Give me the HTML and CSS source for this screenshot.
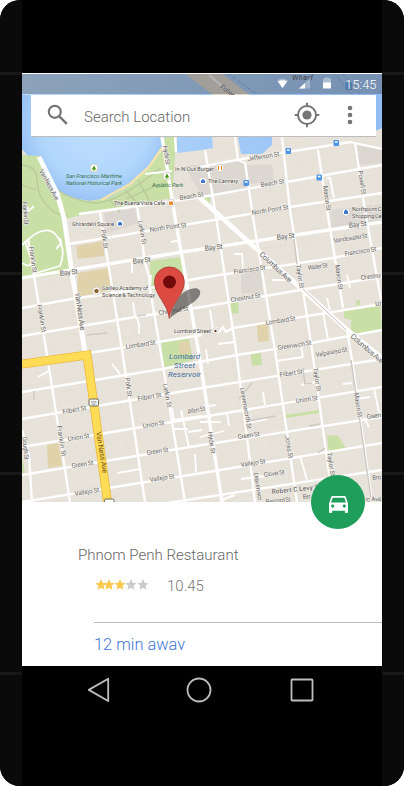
FILE: index.html
```html
<!DOCTYPE html>
<html lang="en">
<head>
<meta charset="utf-8">
<title>Search Location</title>
<link rel="stylesheet" href="styles.css">
</head>
<body>
<div class="device">
  <div class="edge"><i></i><i></i><i></i><i></i></div>
  <div class="front">
    <div class="screen">
      <div class="hero">
        <svg class="map" viewBox="22 73 360 429" width="360" height="429">
          <defs>
            <pattern id="lots" width="13" height="11" patternUnits="userSpaceOnUse" patternTransform="rotate(-9)">
              <path d="M0 .5H13M4 0V11M9.5 0V6" fill="none" stroke="#e2dcd2" stroke-width=".5"/>
            </pattern>
            <linearGradient id="sea" x1="0" x2="1" y1="0" y2="0"><stop offset="0" stop-color="#b9ddff"/><stop offset="1" stop-color="#92bdf3"/></linearGradient>
            <radialGradient id="bay" gradientUnits="userSpaceOnUse" cx="95" cy="125" r="85"><stop offset="0" stop-color="#bfe0ff"/><stop offset=".65" stop-color="#b1d6fc"/><stop offset="1" stop-color="#8fbbf2"/></radialGradient>
          </defs>
          <rect x="22" y="73" width="360" height="429" fill="#e8e3da"/>
          <rect x="22" y="73" width="360" height="429" fill="url(#lots)"/>
          <path d="M22 73H382V128L366 135L272 136V145L262 154H241L238 137H212L213 148L202 150L177 153V137H22Z" fill="url(#sea)"/>
          <path d="M22 95H165V145L149 168L132 184L109 198L89 201L72 198L54 188L47 177L40 157L29 157L22 149Z" fill="url(#bay)"/>
          <path d="M184 73H221L250 95H213Z" fill="#e0d6c8"/>
          <path d="M228 73L256 94M334 73L350 94M342 73L360 94" stroke="#779fd2" stroke-width="1" stroke-dasharray="4 2"/>
          <path d="M209 75L231 94" stroke="#fff" stroke-width="2"/>
          <g fill="#c8dfa5">
            <path d="M22 155L40 156L47 178L54 188L72 198L89 201L109 198L132 184L149 168L161 149L165 137H176L174 171L172 198L137 204L100 211L65 219L66 228L69 273L22 280Z"/>
            <path d="M150 261L181 257L184 274L165 277V288L150 290Z"/>
            <path d="M161 341L189 338L193 360L164 368Z"/>
            <path d="M344 311L380 306L382 330L351 335V320L344 318ZM230 303L238 302L239 313L231 314ZM251 354L261 353L262 365L252 366ZM327 435L338 436L344 445L347 450L329 453ZM285 415L319 410V413L286 418ZM22 457L25 473H22ZM200 195L210 194V204ZM356 301L360 300V305L356 306Z"/>
          </g>
          <path d="M76 246L104 241V256L78 259ZM78 273L108 268L112 290L77 297ZM257 325L268 324L269 341L258 342ZM47 445L59 443L62 466L48 468ZM178 343L189 341L191 353L180 355Z" fill="#e0d2ab"/>
          <path d="M104 213L135 208L139 223L107 233ZM185 166L244 160L250 190L202 197ZM247 165L272 164L274 181L249 184ZM354 145L382 150V163L356 165ZM330 210L382 204V222L332 231ZM241 269L261 267L263 294L241 293Z" fill="#dcd7d0"/>
          <path d="M101 200L130 184L149 167L162 148" fill="none" stroke="#f2e3ae" stroke-width="2.5"/>
          <g fill="none" stroke="#b8c99e" stroke-width="1.3">
            <path d="M22 165C45 168 32 184 42 199S58 214 68 216M54 188Q75 202 95 203T161 168M110 200L120 212M125 190L138 204M138 180L150 202M126 199L165 182M22 185L36 190"/>
          </g>
          <g class="roads">
            <g class="thin">
              <path d="M22 217L34 206M24 222L28 207M22 245Q45 222 56 235T60 266L36 273L25 242M22 263Q32 270 31 258M56 249Q64 242 59 238M132 262V273M171 242L180 240M234 254H242L243 268M272 280H285M327 298L330 310M347 275L350 288M38 377L49 371M112 364L120 374M117 473L140 469M150 289L151 275M133 302L135 316Q140 320 139 334M172 408L174 420M181 410L189 448M173 420L202 416M174 429H188M188 432L202 430M195 454L196 472M206 349L208 364M263 392L265 405M248 423L267 419M227 412L229 426M301 385L320 381M300 456L307 480M241 479L275 475M343 384L352 383M364 418L369 427M200 407L216 405M200 422L221 422M200 437L224 431M210 310L213 329M323 313L328 339M218 344L235 342M301 345L303 357L276 361M356 399L370 397M374 388L379 413M145 174L172 171M327 178H330L334 198"/>
            </g>
            <path d="M200 167L247 158L320 147L350 142L382 149"/>
            <path d="M79 214L202 197L382 165"/>
            <path d="M69 244L202 222L290 207L382 193"/>
            <path class="wide" d="M22 278L182 252L382 222"/>
            <path d="M22 308L72 299L150 288L200 278L333 258L382 248"/>
            <path d="M22 336L135 317L202 307L300 290L382 277"/>
            <path d="M89 353L202 335M233 328L382 304M212 332L216 328L218 333L223 327L226 332L233 328"/>
            <path d="M22 392L162 369L237 355L300 345L382 330"/>
            <path d="M22 419L202 388L382 359"/>
            <path d="M22 447L202 417L382 387"/>
            <path d="M22 475L202 445L382 417"/>
            <path d="M22 502L202 473L382 443"/>
            <path d="M160 504L200 498L382 470M222 500L235 495"/>
            <path d="M28 239L47 355L70 502M22 430L29 455L32 502"/>
            <path d="M100 212L122 350L145 502"/>
            <path d="M137 205L145 263L149 276L150 289L162 360L185 502"/>
            <path class="wide" d="M162 137L175 217L200 360L222 502"/>
            <path d="M175 137L176 152M205 150L215 210L236 350L255 502"/>
            <path d="M235 137L238 160L245 163L253 217L275 350L297 502"/>
            <path d="M282 137L290 210L303 290L312 350L333 502"/>
            <path d="M318 150L327 210L343 308M347 330L352 360L372 502"/>
            <path d="M355 143L365 210L381 300"/>
            <path class="broad" d="M39 157L57 193L64 218L72 273L85 352"/>
            <path class="broad" d="M200 198L260 252L303 290L345 328L382 358"/>
          </g>
          <path d="M294 239L297 264M252 383L239 399M303 368L305 384L312 383M248 421L276 416M309 426L320 424M318 453L325 448M87 335L107 333M34 391V400M137 316L146 315M351 360L371 498" fill="none" stroke="#cdc9c3" stroke-width="1.5"/>
          <path d="M303 289L346 330" stroke="#c7c2bb" stroke-width="1"/>
          <path d="M22 364L87 355L108 505" fill="none" stroke="#e9b83f" stroke-width="9"/>
          <path d="M22 364L87 355L108 505" fill="none" stroke="#ffdc55" stroke-width="7.400"/>

          <g class="st">
            <text textLength="32" transform="translate(248 161) rotate(-9)">Jefferson St</text>
            <text textLength="24" transform="translate(180 200) rotate(-9)">Beach St</text>
            <text textLength="24" transform="translate(261 187) rotate(-9)">Beach St</text>
            <text textLength="37" transform="translate(150 232) rotate(-8)">North Point St</text>
            <text textLength="37" transform="translate(252 215) rotate(-9)">North Point St</text>
            <text class="lg" textLength="18" transform="translate(60 276) rotate(-7)">Bay St</text>
            <text class="lg" textLength="18" transform="translate(133 264) rotate(-7)">Bay St</text>
            <text class="lg" textLength="18" transform="translate(205 251) rotate(-7)">Bay St</text>
            <text class="lg" textLength="18" transform="translate(277 240) rotate(-7)">Bay St</text>
            <text class="lg" textLength="18" transform="translate(349 228) rotate(-7)">Bay St</text>
            <text textLength="34" transform="translate(334 243) rotate(-9)">Vandewater St</text>
            <text textLength="32" transform="translate(345 256) rotate(-9)">Francisco St</text>
            <text textLength="32" transform="translate(234 274) rotate(-8)">Francisco St</text>
            <text textLength="20" transform="translate(308 270) rotate(-8)">Water St</text>
            <text textLength="30" transform="translate(159 315) rotate(-9)">Chestnut St</text>
            <text textLength="30" transform="translate(231 302) rotate(-9)">Chestnut St</text>
            <text textLength="20" transform="translate(361 280) rotate(-8)">Chestnu</text>
            <text textLength="30" transform="translate(126 349) rotate(-9)">Lombard St</text>
            <text textLength="30" transform="translate(266 325) rotate(-9)">Lombard St</text>
            <text textLength="6" transform="translate(375.500 306) rotate(-9)">Lo</text>
            <text textLength="34" transform="translate(278 350) rotate(-9)">Greenwich St</text>
            <text textLength="32" transform="translate(316 357) rotate(-10)">Valparaiso St</text>
            <text textLength="24" transform="translate(63 414) rotate(-10)">Filbert St</text>
            <text textLength="24" transform="translate(138 401) rotate(-10)">Filbert St</text>
            <text textLength="23" transform="translate(280 377) rotate(-8)">Filbert St</text>
            <text textLength="22" transform="translate(68 441) rotate(-9)">Union St</text>
            <text textLength="22" transform="translate(143 428) rotate(-9)">Union St</text>
            <text textLength="22" transform="translate(296 403) rotate(-8)">Union St</text>
            <text textLength="18" transform="translate(188 414) rotate(-12)">Allen St</text>
            <text textLength="22" transform="translate(72 468) rotate(-9)">Green St</text>
            <text textLength="22" transform="translate(147 455) rotate(-9)">Green St</text>
            <text textLength="22" transform="translate(238 439) rotate(-8)">Green St</text>
            <text textLength="14.500" transform="translate(367 419) rotate(-8)">Green</text>
            <text textLength="25" transform="translate(75 496) rotate(-10)">Vallejo St</text>
            <text textLength="25" transform="translate(150 482) rotate(-9)">Vallejo St</text>
            <text textLength="25" transform="translate(241 467) rotate(-9)">Vallejo St</text>
            <text textLength="21" transform="translate(264 477) rotate(-8)">Glover St</text>
            <text textLength="25" transform="translate(266 504) rotate(-6)">Bernard St</text>
            <text textLength="8" transform="translate(303 499) rotate(-6)">Ber</text>
            <text textLength="9" transform="translate(372.500 480) rotate(-6)">Bro</text>
            <text textLength="16" transform="translate(365.500 501.500) rotate(-2)">ic Ave</text>
            <text class="bold" textLength="50" transform="translate(272 494) rotate(-6)">Robert C Levy Tu</text>
            <text textLength="34" transform="translate(39 171) rotate(61)">Van Ness Ave</text>
            <text class="lg" textLength="38" transform="translate(75 293) rotate(82)">Van Ness Ave</text>
            <text class="brown" textLength="42" transform="translate(96 432) rotate(81)">Van Ness Ave</text>
            <text textLength="26" transform="translate(29 247) rotate(82)">Franklin St</text>
            <text textLength="28" transform="translate(37 305) rotate(80)">Franklin St</text>
            <text textLength="31" transform="translate(57 426) rotate(81)">Franklin St</text>
            <text textLength="23" transform="translate(22.500 437) rotate(85)">Gough St</text>
            <text textLength="23" transform="translate(22.500 202) rotate(86)">Franklin St</text>
            <text textLength="19" transform="translate(101 230) rotate(82)">Polk St</text>
            <text textLength="19" transform="translate(125 378) rotate(82)">Polk St</text>
            <text textLength="24" transform="translate(138 221) rotate(80)">Larkin St</text>
            <text textLength="24" transform="translate(163 384) rotate(80)">Larkin St</text>
            <text textLength="19" transform="translate(163 146) rotate(81)">Hyde St</text>
            <text textLength="22" transform="translate(208 432) rotate(82)">Hyde St</text>
            <text textLength="42" transform="translate(240 388) rotate(80)">Leavenworth St</text>
            <text textLength="28" transform="translate(254 473) rotate(82)">Leavenwor</text>
            <text textLength="23" transform="translate(285 436) rotate(81)">Jones St</text>
            <text textLength="24" transform="translate(296 265) rotate(81)">Taylor St</text>
            <text textLength="24" transform="translate(313 368) rotate(81)">Taylor St</text>
            <text textLength="24" transform="translate(327 453) rotate(81)">Taylor St</text>
            <text textLength="25" transform="translate(323 186) rotate(82)">Mason St</text>
            <text textLength="25" transform="translate(335 265) rotate(82)">Mason St</text>
            <text textLength="25" transform="translate(354 393) rotate(81)">Mason St</text>
            <text textLength="24" transform="translate(358 171) rotate(81)">Powell St</text>
            <text class="lg" textLength="41" transform="translate(259 255) rotate(43)">Columbus Ave</text>
            <text class="lg" textLength="41" transform="translate(350 337) rotate(41)">Columbus Ave</text>
          </g>
          <g class="poi">
            <g class="park">
              <text x="66" y="178" textLength="56">San Francisco Maritime</text>
              <text x="66" y="185" textLength="56">National Historical Park</text>
              <text x="152" y="186.500" textLength="31">Aquatic Park</text>
            </g>
            <text x="114" y="205" textLength="51">The Buena Vista Cafe</text>
            <text x="175" y="170.500" textLength="39">In-N-Out Burger</text>
            <text x="208" y="183" textLength="30">The Cannery</text>
            <text x="352" y="211" textLength="29.500">Northpoint C</text>
            <text x="352" y="217.500" textLength="29.500">Shopping Ce</text>
            <text x="72" y="225.500" textLength="42">Ghirardelli Square</text>
            <text x="102" y="290" textLength="46">Galileo Academy of</text>
            <text x="102" y="296.500" textLength="53">Science &amp; Technology</text>
            <text x="174" y="332.500" textLength="37">Lombard Street</text>
          </g>
          <g class="reservoir" text-anchor="middle">
            <text x="184.500" y="359" textLength="31">Lombard</text>
            <text x="184.500" y="368" textLength="21">Street</text>
            <text x="184.500" y="377" textLength="33">Reservoir</text>
          </g>
          <g fill="#fff" stroke="#c9c4bb" stroke-width=".7">
            <circle cx="94" cy="168" r="4"/><circle cx="167" cy="176" r="4"/><circle cx="171" cy="203" r="3.800"/><circle cx="220" cy="168" r="4"/><circle cx="203" cy="181" r="4"/><circle cx="346" cy="212" r="4"/><circle cx="120" cy="223.500" r="4"/><circle cx="96.500" cy="291" r="4"/><circle cx="215.500" cy="331" r="3"/>
          </g>
          <path d="M94 165.500L96.300 169.500H94.600V170.800H93.400V169.500H91.700ZM167 173.500L169.300 177.500H167.600V178.800H166.400V177.500H164.700Z" fill="#4d9e16"/>
          <path d="M169 201.500H173V205H169Z" fill="#ef8528"/>
          <path d="M218.500 166V170M221.500 166V170" stroke="#ef8528" stroke-width="1"/>
          <path d="M201 183V180.500L203 179L205 180.500V183ZM344 214V211.500L346 209L348 211.500V214ZM118 225.500V223L120 221.500L122 223V225.500Z" fill="#3f78d0"/>
          <path d="M94 290L96.500 288.800L99 290L98 293H95Z" fill="#906333"/><circle cx="215.500" cy="331" r="1.200" fill="#713622"/>
          <g fill="#4f97e6"><rect x="285.500" y="148" width="5.500" height="6" rx="1"/><rect x="333.500" y="140" width="5.500" height="6" rx="1"/><rect x="243.500" y="180" width="5.500" height="6" rx="1"/><rect x="316.500" y="174.500" width="5.500" height="6" rx="1"/><rect x="345.500" y="82" width="6.500" height="8" rx="1"/></g>
          <path d="M287 150H289.500M335 142H337.500M245 182H247.500M318 176.500H320.500" stroke="#fff" stroke-width="1.500"/>
          <rect x="89" y="399" width="9.500" height="7" rx="1.500" fill="#fff" stroke="#6b6557"/><text class="shield" x="90.500" y="404.700" textLength="6.500">101</text>
          <rect x="104.500" y="499" width="9.500" height="7" rx="1.500" fill="#fff" stroke="#6b6557"/>
          <text class="pier" textLength="21" x="292" y="80">Wharf</text>
          <text class="pier up" textLength="16" transform="translate(220 87.500) rotate(38)">Fisher</text>
          <path d="M170 318C174 304 180 291 191 289C198 287 201 290 200 294C198 302 184 307 170 318Z" fill="#333" fill-opacity=".58"/>
          <path d="M169.300 318.500C168 304 154.500 295 154.500 281.800A14.900 14.900 0 0 1 184.300 281.800C184.300 295 170.600 304 169.300 318.500Z" fill="#dc4b41" stroke="#a63a31" stroke-width=".8"/>
          <circle cx="169.500" cy="282" r="6.500" fill="#720a0c"/>
        </svg>
        <div class="overlay">
          <div class="status">
            <svg width="60" height="14" viewBox="0 0 60 14">
              <path d="M1 3.500Q6.500-.5 12 3.500L6.500 11Z" fill="#fff" fill-opacity=".3"/><path d="M1.800 4.600Q6.500 2 11.200 4.600L6.500 11Z" fill="#fff"/>
              <path d="M23 11.500H34V1Z" fill="#fff" fill-opacity=".3"/><path d="M23 11.500H29V6Z" fill="#fff"/>
              <path d="M47 1.500H49V.5H53V1.500H55V6H47Z" fill="#fff" fill-opacity=".4"/><path d="M47 5.500H55V11.500H47Z" fill="#fff"/>
            </svg>
            <span class="clock">15:45</span>
          </div>
          <div class="search">
            <svg class="lens" width="22" height="22" viewBox="0 0 22 22"><circle cx="7.800" cy="7.800" r="6" fill="none" stroke="#757575" stroke-width="2.200"/><path d="M12.300 12.300L19.800 19.800" stroke="#757575" stroke-width="2.500"/></svg>
            <span class="placeholder">Search Location</span>
            <svg class="locate" width="26" height="26" viewBox="0 0 26 26"><circle cx="13" cy="13" r="9" fill="none" stroke="#757575" stroke-width="2"/><circle cx="13" cy="13" r="4.600" fill="#757575"/><path d="M13 .7V4M13 22V25.300M.7 13H4M22 13H25.300" stroke="#757575" stroke-width="2"/></svg>
            <svg class="more" width="6" height="20" viewBox="0 0 6 20" fill="#757575"><circle cx="3" cy="3" r="2.300"/><circle cx="3" cy="10" r="2.300"/><circle cx="3" cy="17" r="2.300"/></svg>
          </div>
        </div>
      </div>
      <div class="details">
        <button class="fab" aria-label="Directions"><svg width="19" height="17" viewBox="3 5 18 16"><path fill="#fff" d="M18.920 6.010C18.720 5.420 18.160 5 17.500 5h-11c-.66 0-1.210.42-1.420 1.010L3 12v8c0 .55.45 1 1 1h1c.55 0 1-.45 1-1v-1h12v1c0 .55.45 1 1 1h1c.55 0 1-.45 1-1v-8l-2.080-5.990zM6.500 16c-.83 0-1.500-.67-1.500-1.500S5.670 13 6.500 13s1.500.67 1.500 1.500S7.330 16 6.500 16zm11 0c-.83 0-1.500-.67-1.500-1.500s.67-1.500 1.500-1.500 1.500.67 1.500 1.500-.67 1.500-1.500 1.500zM5 11l1.500-4.500h11L19 11H5z"/></svg></button>
        <div class="name">Phnom Penh Restaurant</div>
        <div class="rating">
          <svg width="54" height="12" viewBox="0 0 54 12">
            <defs><path id="star" d="M5 -.3L6.600 3.500L10.500 3.900L7.600 6.500L8.400 10.500L5 8.400L1.600 10.500L2.400 6.500L-.5 3.900L3.400 3.500Z"/></defs>
            <g fill="#fcc94f"><use href="#star" x="1" y=".3"/><use href="#star" x="9" y=".3"/><use href="#star" x="20" y=".3"/></g>
            <g fill="#cbcbcb"><use href="#star" x="31" y=".3"/><use href="#star" x="43" y=".3"/></g>
          </svg>
          <span>10.45</span>
        </div>
        <div class="eta"><span>12 min away</span></div>
      </div>
    </div>
    <div class="nav">
      <svg width="24" height="26" viewBox="0 0 24 26"><path d="M21.200 1.800V24L1.800 12.900Z"/></svg>
      <svg width="26" height="26" viewBox="0 0 26 26"><circle cx="13" cy="13" r="11.500"/></svg>
      <svg width="24" height="24" viewBox="0 0 24 24"><rect x="1.500" y="1.500" width="21" height="21" rx=".7"/></svg>
    </div>
  </div>
  <div class="edge"><i></i><i></i><i></i><i></i></div>
</div>
</body>
</html>
```
FILE: styles.css
```css
* { box-sizing: border-box; }
body { margin: 0; background: #fff; font-family: Roboto, "Liberation Sans", sans-serif; }
.device { display: flex; width: 404px; height: 786px; background: #000; border-radius: 20px; overflow: hidden; }
.edge { width: 22px; background: #0a0a0a; padding-top: 72px; display: flex; flex-direction: column; gap: 197px; }
.edge i { display: block; height: 3px; background: #171717; }
.front { width: 360px; padding-top: 73px; }
.screen { height: 593px; background: #fff; overflow: hidden; }
.hero { display: grid; height: 429px; }
.map, .overlay { grid-area: 1 / 1; display: block; }
.overlay { z-index: 1; }
.status { display: flex; align-items: center; justify-content: flex-end; gap: 9px; height: 21px; padding-right: 5px; border-top: 1px solid #fff; background: rgba(80, 85, 95, .43); }
.clock { width: 32px; color: #fff; font-size: 13px; line-height: 21px; padding-top: 1px; white-space: nowrap; font-weight: 300; }
.search { display: flex; align-items: center; width: 345px; height: 42px; margin: 1px 0 0 9px; padding-left: 16px; background: #fff; border-bottom: 1px solid #bdbdbd; }
.lens { margin-top: -2px; }
.placeholder { width: 210px; margin: 3px 0 0 15px; font-size: 15px; line-height: 20px; font-weight: 300; color: #666; }
.locate { margin-top: -1px; }
.more { margin: -1px 0 0 26.500px; }
.details { position: relative; height: 164px; padding-top: 43px; font-weight: 300; }
.fab { position: absolute; top: -27px; left: 289px; width: 54px; height: 54px; padding: 4px 0 0; border: 0; border-radius: 50%; background: #1f9d5b; display: flex; align-items: center; justify-content: center; }
.name { margin-left: 56px; font-size: 15.050px; line-height: 20px; color: #666; }
.rating { display: flex; align-items: center; gap: 18px; height: 20px; margin: 10px 0 0 73px; font-size: 15px; line-height: 20px; color: #777; }
.rating span { padding-top: 2px; }
.rating svg { flex: none; }
.eta { margin: 27px 0 0 72px; padding-top: 11px; border-top: 1px solid #bdbdbd; color: #3f75d8; font-size: 16.400px; }
.eta span { display: block; height: 16px; line-height: 21px; overflow: hidden; }
.nav { display: flex; align-items: center; height: 47px; padding-left: 65px; }
.nav svg { fill: none; stroke: #bdbdbd; stroke-width: 1.800; stroke-linejoin: round; }
.nav svg:nth-child(2) { margin-left: 75px; }
.nav svg:nth-child(3) { margin-left: 77.500px; }
.roads { fill: none; stroke: #fff; stroke-width: 2.300; stroke-linejoin: round; }
.roads .thin { stroke-width: 1.800; }
.roads .wide { stroke-width: 3.400; }
.roads .broad { stroke-width: 4.800; }
.map text { font-size: 6.500px; fill: #666; paint-order: stroke; stroke: #f5f2ec; stroke-width: 1px; }
.map .lg { font-size: 7.300px; }
.map .bold { font-weight: 500; }
.map .brown { font-size: 7.500px; fill: #7a571b; stroke: #ffdc55; }
.map .poi text { font-size: 5.800px; fill: #484848; }
.map .poi .park text { fill: #37744f; font-style: italic; stroke: none; }
.map .reservoir text { font-size: 8px; font-style: italic; fill: #456d9f; stroke: none; }
.map .shield { font-size: 4.500px; stroke: none; }
.map .pier { font-size: 7.300px; font-style: italic; fill: #333; stroke: none; }
.map .up { font-style: normal; font-size: 6px; }
```
